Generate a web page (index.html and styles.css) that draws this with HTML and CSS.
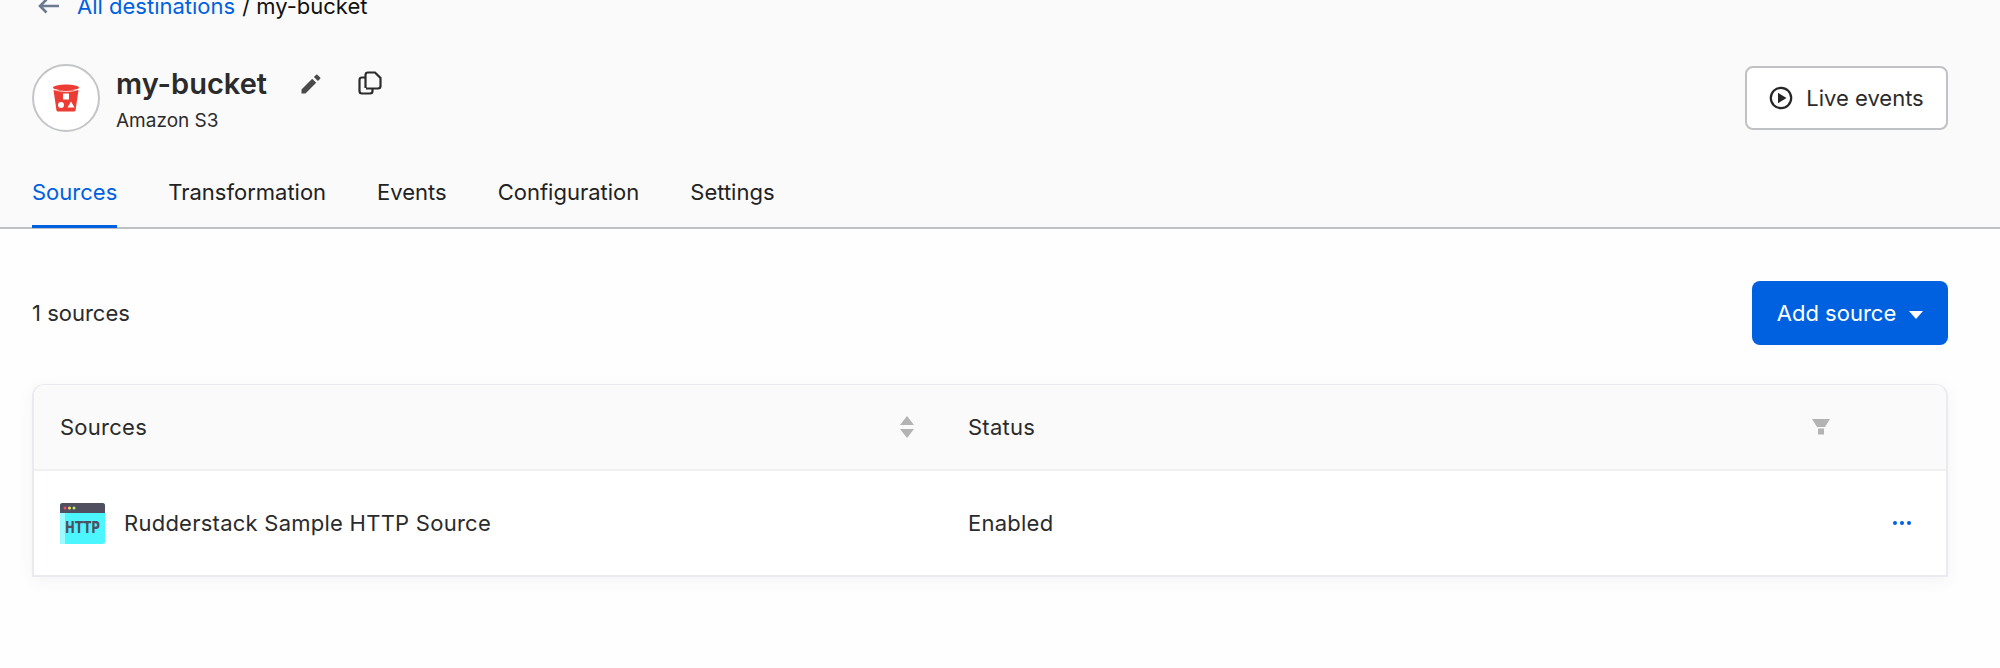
FILE: index.html

```html
<!DOCTYPE html>
<html>
<head>
<meta charset="utf-8">
<title>my-bucket</title>
<link rel="stylesheet" href="styles.css">
</head>
<body>
<div class="top">
    <div class="crumbs">
        <svg class="back" width="24" height="16" viewBox="0 0 24 16"><path d="M22 8H3M9.500 1.500L3 8l6.500 6.500" fill="none" stroke="#6b7a90" stroke-width="2.600"/></svg>
        <a class="crumb-link">All destinations</a>
        <span>/ my-bucket</span>
    </div>

    <div class="head-row">
        <div class="avatar">
            <svg width="28" height="28" viewBox="0 0 28 28">
                <path d="M1.500 6L4.500 26.500Q4.700 27.500 6 27.500H22Q23.300 27.500 23.500 26.500L26.500 6Z" fill="#ec3c33"/>
                <ellipse cx="14" cy="3.500" rx="13" ry="3" fill="#ec3c33"/>
                <path d="M1 5.500Q14 9.500 27 5.500" fill="none" stroke="#fff" stroke-width="0.800"/>
                <rect x="11" y="9.500" width="6" height="6" fill="#fff"/>
                <circle cx="9" cy="21" r="3" fill="#fff"/>
                <path d="M19 17.500l3.500 6h-7z" fill="#fff"/>
            </svg>
        </div>
        <div class="title-box">
            <div class="title-line">
                <h1>my-bucket</h1>
                <svg class="pencil" width="20" height="20" viewBox="0 0 20 20"><path d="M0.500 15.500V19.500H4.500L15.200 8.800L11.200 4.800ZM19.200 4.800Q19.800 4.200 19.200 3.600L16.400 0.800Q15.800 0.200 15.200 0.800L12.900 3.100L16.900 7.100Z" fill="#4a4a4a"/></svg>
                <svg class="copy" width="24" height="24" viewBox="0 0 24 24" fill="none" stroke="#2b2b2b" stroke-width="2.200"><path d="M7.500 17V4Q7.500 1.500 10 1.500H17L22.500 7V15Q22.500 17.500 20 17.500H8"/><path d="M7.500 6.500H4Q1.500 6.500 1.500 9V20Q1.500 22.500 4 22.500H12Q14.500 22.500 14.500 20V17.500"/></svg>
            </div>
            <div class="subtitle">Amazon S3</div>
        </div>
        <button class="btn-live">
            <svg width="24" height="24" viewBox="0 0 24 24"><circle cx="12" cy="12" r="10.200" fill="none" stroke="#262626" stroke-width="2.200"/><path d="M9 6.800L17.500 12L9 17.200Z" fill="#262626"/></svg>
            Live events
        </button>
    </div>

    <div class="tabs">
        <div class="tab active">Sources</div>
        <div class="tab">Transformation</div>
        <div class="tab">Events</div>
        <div class="tab">Configuration</div>
        <div class="tab">Settings</div>
    </div>
</div>

<div class="content">
    <div class="toolbar">
        <span>1 sources</span>
        <button class="btn-add">Add source <span class="caret"></span></button>
    </div>

    <div class="table">
        <div class="row head">
            <div class="cell">
                Sources
                <svg class="sort" width="14" height="22" viewBox="0 0 14 22"><path d="M7 0L14 9H0Z M0 13H14L7 22Z" fill="#b3b3b3"/></svg>
            </div>
            <div class="cell">
                Status
                <svg class="filter" width="18" height="16" viewBox="0 0 18 16"><path d="M0 0H18L13 8H5Z" fill="#b3b3b3"/><rect x="6" y="9.500" width="6" height="6" fill="#b3b3b3"/></svg>
            </div>
        </div>
        <div class="row body">
            <div class="cell">
                <svg class="http" width="45" height="41" viewBox="0 0 45 41">
                    <rect width="45" height="41" rx="2.500" fill="#4cf6ff"/>
                    <rect x="0" y="10" width="5" height="31" fill="#9dfaff"/>
                    <path d="M0 10V2.500Q0 0 2.500 0H42.500Q45 0 45 2.500V10Z" fill="#4f4f5f"/>
                    <circle cx="5" cy="5" r="1.500" fill="#f4506a"/>
                    <circle cx="9.500" cy="5" r="1.500" fill="#f6e05e"/>
                    <circle cx="14" cy="5" r="1.500" fill="#b5f06a"/>
                    <text transform="translate(5 30) scale(0.74 1)" class="http-text">HTTP</text>
                </svg>
                <span class="source-name">Rudderstack Sample HTTP Source</span>
            </div>
            <div class="cell">
                Enabled
                <svg class="dots" width="18" height="4" viewBox="0 0 18 4"><circle cx="2" cy="2" r="2" fill="#0061e0"/><circle cx="9" cy="2" r="2" fill="#0061e0"/><circle cx="16" cy="2" r="2" fill="#0061e0"/></svg>
            </div>
        </div>
    </div>
</div>
</body>
</html>
```

FILE: styles.css

```css
* {
    box-sizing: border-box;
}

html, body {
    height: 100%;
    overflow: hidden;
}

body {
    margin: 0;
    background: #fefefe;
    color: #2b2b2b;
    font-family: Inter, "Liberation Sans", sans-serif;
    font-size: 22px;
}

.top {
    height: 229px;
    background: #fafafa;
    border-bottom: 2px solid #bfc0c4;
    padding: 0 52px 0 32px;
}

.crumbs {
    height: 12px;
    display: flex;
    align-items: center;
    color: #111;
}

.back {
    margin: 0 16px 0 5px;
}

.crumb-link {
    color: #0061e0;
    margin-right: 7px;
}

.head-row {
    display: flex;
    align-items: flex-start;
    margin-top: 52px;
    height: 68px;
}

.avatar {
    width: 68px;
    height: 68px;
    border: 2px solid #c4c5c9;
    border-radius: 50%;
    background: #fff;
    display: flex;
    align-items: center;
    justify-content: center;
    margin-right: 16px;
}

.title-box {
    flex: 1;
}

.title-line {
    display: flex;
    align-items: center;
    height: 40px;
}

h1 {
    margin: 0;
    font-size: 29px;
    font-weight: 600;
    line-height: 40px;
}

.pencil {
    margin-left: 34px;
}

.copy {
    margin-left: 37px;
    margin-top: -2px;
}

.subtitle {
    font-size: 19px;
    line-height: 24px;
    margin-top: 5px;
}

button {
    font-family: inherit;
    font-size: 22px;
    border-radius: 8px;
}

.btn-live {
    width: 203px;
    height: 64px;
    margin-top: 2px;
    background: #fff;
    color: #2b2b2b;
    border: 2px solid #c0c1c4;
    display: flex;
    align-items: center;
    justify-content: center;
    gap: 13px;
}

.tabs {
    display: flex;
    gap: 51px;
    margin-top: 29px;
}

.tab {
    height: 67px;
    padding-top: 17px;
    line-height: 28px;
    color: #222;
}

.tab.active {
    color: #0061e0;
    border-bottom: 3px solid #0061e0;
}

.content {
    padding: 0 52px 0 32px;
}

.toolbar {
    display: flex;
    justify-content: space-between;
    align-items: center;
    padding-top: 52px;
}

.btn-add {
    width: 196px;
    height: 64px;
    background: #0061e0;
    color: #fff;
    border: none;
    display: flex;
    align-items: center;
    justify-content: center;
    gap: 13px;
}

.caret {
    width: 0;
    height: 0;
    border-left: 7px solid transparent;
    border-right: 7px solid transparent;
    border-top: 8px solid #fff;
    margin-top: 3px;
}

.table {
    margin-top: 39px;
    border: 2px solid #e9ebf0;
    border-top-width: 1px;
    border-radius: 12px 12px 0 0;
    background: #fff;
    box-shadow: 0 4px 16px rgba(60, 70, 110, 0.06);
    overflow: hidden;
}

.row {
    display: grid;
    grid-template-columns: 908px 1fr;
}

.row.head {
    height: 86px;
    background: #fafafa;
    border-bottom: 2px solid #f0f0f0;
}

.row.body {
    height: 104px;
}

.cell {
    display: flex;
    align-items: center;
    padding-left: 26px;
    color: #2b2b2b;
    letter-spacing: 0.250px;
}

.sort {
    margin-left: auto;
    margin-right: 28px;
}

.filter {
    margin-left: auto;
    margin-right: 116px;
}

.dots {
    margin-left: auto;
    margin-right: 35px;
}

.http {
    margin-right: 19px;
}

.http-text {
    font-family: "DejaVu Sans", sans-serif;
    font-size: 16px;
    font-weight: 700;
    letter-spacing: 0;
    fill: #4f4f5f;
}
```
